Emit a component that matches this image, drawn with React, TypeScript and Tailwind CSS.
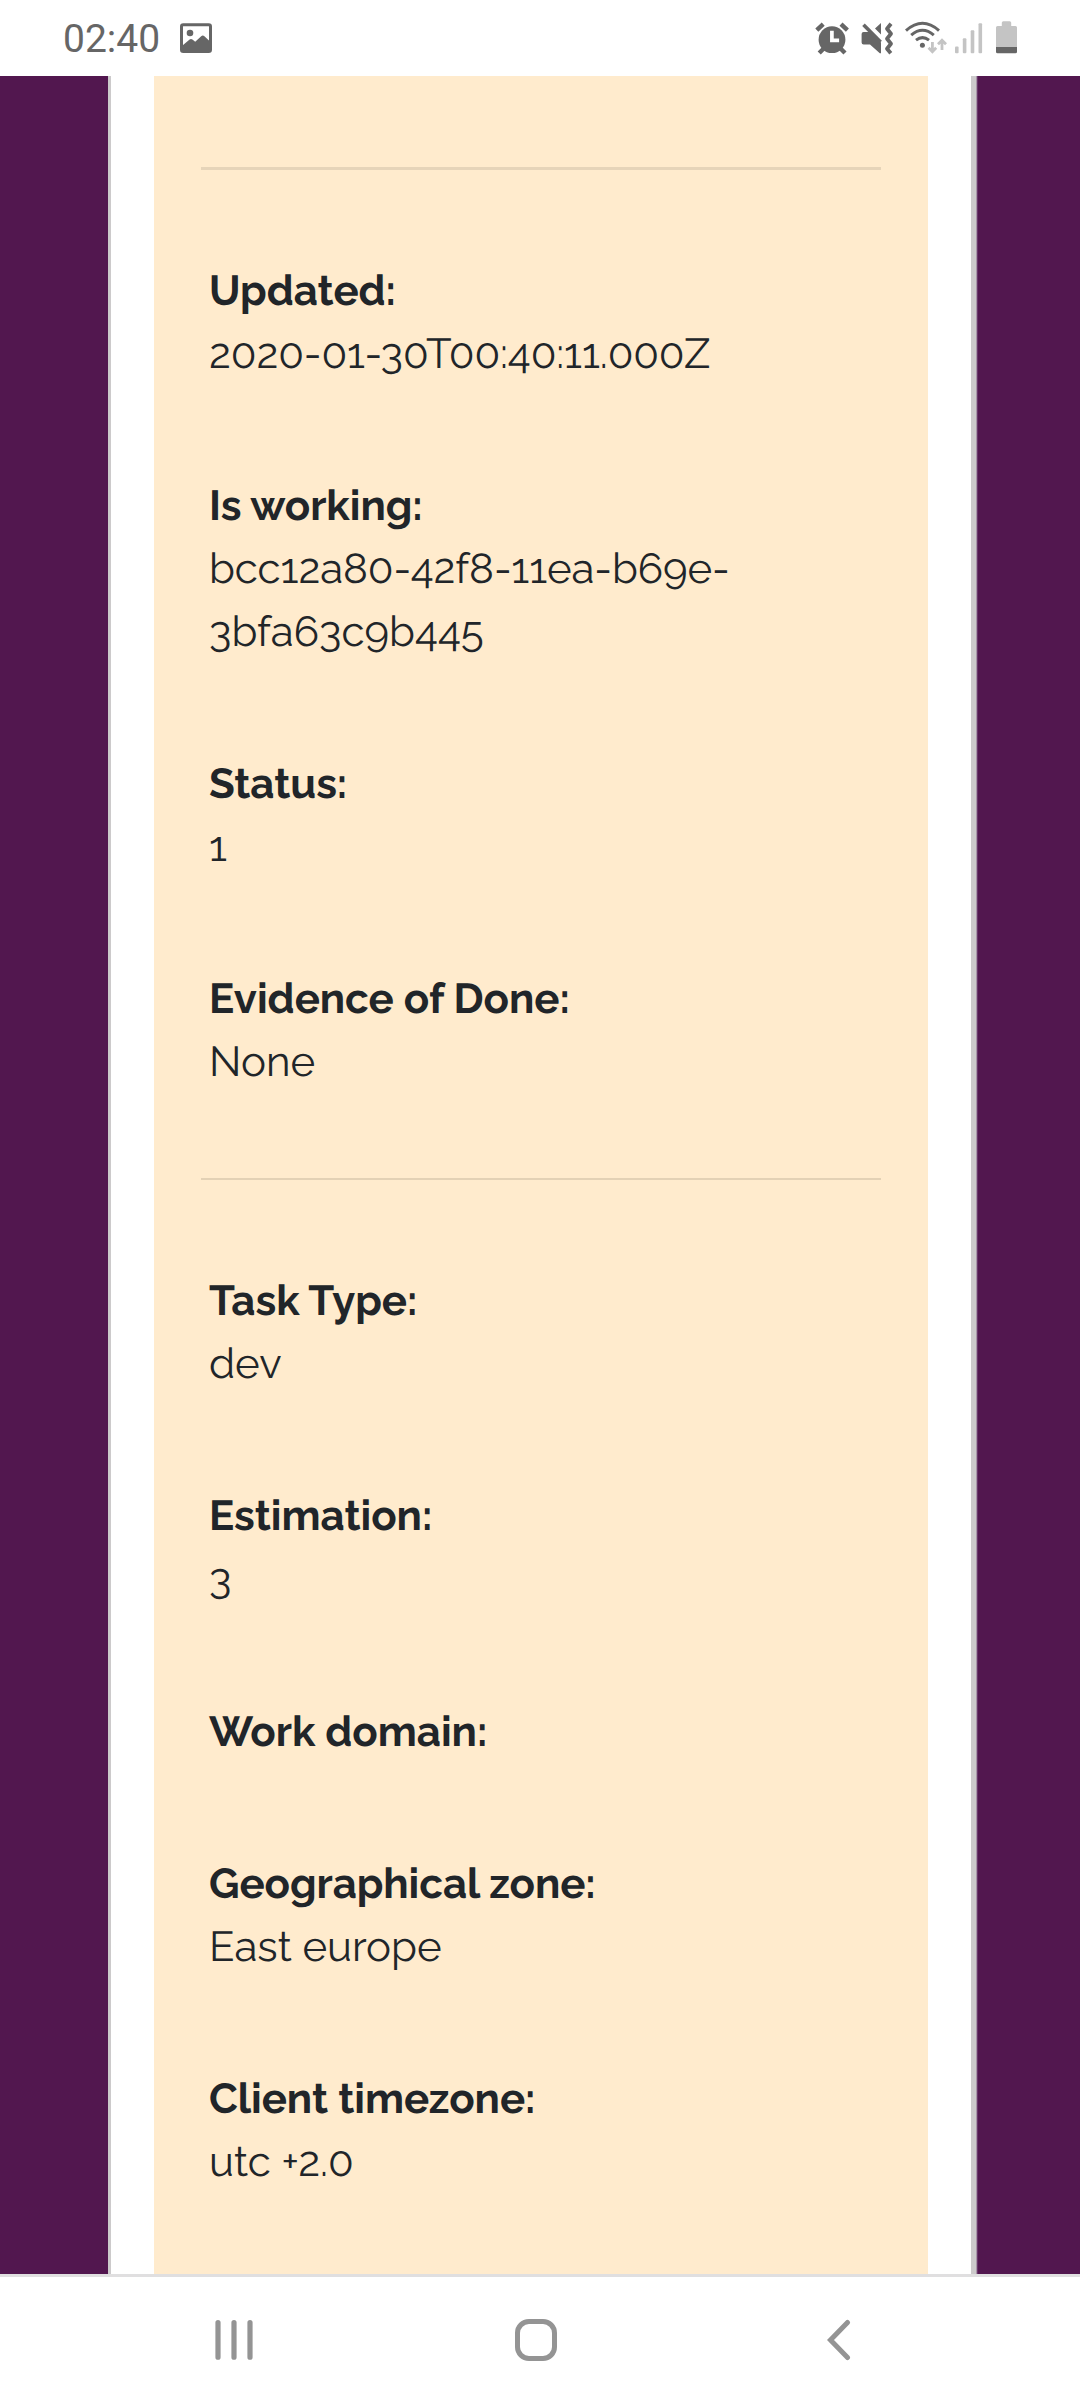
type Field = { label: string; lines: string[] };

const progressFields: Field[] = [
  { label: 'Updated:', lines: ['2020-01-30T00:40:11.000Z'] },
  { label: 'Is working:', lines: ['bcc12a80-42f8-11ea-b69e-', '3bfa63c9b445'] },
  { label: 'Status:', lines: ['1'] },
  { label: 'Evidence of Done:', lines: ['None'] },
];

const taskFields: Field[] = [
  { label: 'Task Type:', lines: ['dev'] },
  { label: 'Estimation:', lines: ['3'] },
  { label: 'Work domain:', lines: [] },
  { label: 'Geographical zone:', lines: ['East europe'] },
  { label: 'Client timezone:', lines: ['utc +2.0'] },
];

function PictureIcon() {
  return (
    <svg className="h-[30px] w-8" viewBox="0 0 32 30" fill="none">
      <rect x="1.5" y="1.7" width="29" height="26.8" rx="1.8" stroke="#666" strokeWidth="3" />
      <circle cx="10" cy="10" r="3.3" fill="#666" />
      <path d="M2.5 22.5L9.6 16.4q1.4-1 2.8 0l2.8 2.4L21.2 13.2q1.6-1.2 3.2 0L29.5 18v10h-27z" fill="#666" />
    </svg>
  );
}

function StatusIcons() {
  return (
    <svg className="h-[76px] w-[204px]" viewBox="815 0 204 76" fill="none">
      {/* alarm */}
      <circle cx="832" cy="39.7" r="13.4" fill="#666" />
      <g stroke="#666" strokeWidth="4.4">
        <path d="M816.8 30.2l6.4-6M847.4 30.2l-6.4-6M819.2 53l5-5M845 53l-5-5" />
      </g>
      <path d="M831.9 30.7v9.6h7.2" stroke="#fff" strokeWidth="3.7" />
      {/* muted, vibrate */}
      <path d="M863.6 32h6.6L881 42.6v10.6h-1.2L870 44.4h-6.4q-2 0-2-2V34q0-2 2-2zM881 23v11.6l-6-6z" fill="#666" />
      <path d="M863.5 24.8L880.6 42" stroke="#666" strokeWidth="3.6" />
      <path d="M891 23.8l-4 4.9 4 5-4 5 4 5-4 5 3.8 4.6" stroke="#666" strokeWidth="3.8" strokeLinejoin="round" />
      {/* wifi */}
      <g stroke="#666" strokeWidth="3">
        <path d="M906 30.6q16.5-14.6 33 0M911.2 35.1q11.3-9.8 22.6 0M916 40.2q6.5-5.2 13 0" />
      </g>
      <circle cx="922.4" cy="45.2" r="2.5" fill="#666" />
      <path
        d="M932.4 42v10M928.6 47.8l3.8 4 3.8-4M942 50V40.2M938 44.2l4-4 4 4"
        stroke="#c4c4c4"
        strokeWidth="2.8"
      />
      {/* signal */}
      <g fill="#c4c4c4">
        <rect x="955" y="46.5" width="3.6" height="6.8" rx="1" />
        <rect x="962.8" y="38.2" width="3.6" height="15.1" rx="1" />
        <rect x="970.7" y="30.3" width="3.6" height="23" rx="1" />
        <rect x="978.5" y="23.3" width="3.6" height="30" rx="1" />
      </g>
      {/* battery */}
      <path d="M997.5 26h4.3v-3.2q0-1.5 1.5-1.5h6.4q1.5 0 1.5 1.5V26h4.3q1.5 0 1.5 1.5V48h-21V27.5q0-1.5 1.5-1.5z" fill="#c4c4c4" />
      <path d="M996 47h21v4.8q0 1.5-1.5 1.5h-18q-1.5 0-1.5-1.5z" fill="#666" />
    </svg>
  );
}

function FieldGroup({ fields }: { fields: Field[] }) {
  return (
    <dl className="flex flex-col gap-[89.2px] pl-2">
      {fields.map((field) => (
        <div key={field.label}>
          <dt className="font-bold tracking-[-0.04px] whitespace-nowrap">{field.label}</dt>
          {field.lines.map((line) => (
            <dd
              key={line}
              className={line.length > 20 ? 'tracking-[-0.1px] whitespace-nowrap' : 'whitespace-nowrap'}
            >
              {line}
            </dd>
          ))}
        </div>
      ))}
    </dl>
  );
}

export default function App() {
  return (
    <div className="flex h-[2400px] w-[1080px] flex-col overflow-hidden bg-white">
      <header className="flex h-[76px] shrink-0 items-center pr-[61px] pl-[63px]">
        <span className="mt-[3px] font-['Roboto',sans-serif] text-[39px] leading-none text-[#666]">02:40</span>
        <div className="ml-5">
          <PictureIcon />
        </div>
        <div className="ml-auto">
          <StatusIcons />
        </div>
      </header>

      <main className="flex h-[2198px] shrink-0 overflow-hidden bg-[#52174f] pl-[108px]">
        <div className="flex h-full w-[868px] border-r-[5px] border-l-[3px] border-[#cccacb] bg-white px-[43px] shadow-[1px_0_0_0_#a995a8,2px_0_0_0_#68376a]">
          <section className="w-full bg-[#ffebcd] px-[47px] font-['Raleway','Lato',sans-serif] text-[42px] leading-[63px] text-[#212529] oldstyle-nums [text-rendering:geometricPrecision]">
            <hr className="mt-[91px] mb-[88.6px] border-t-[3px] border-[#e6d4b9]" />
            <FieldGroup fields={progressFields} />
            <hr className="mt-[84.8px] mb-[89.2px] border-t-[2px] border-[#e3d1b5]" />
            <FieldGroup fields={taskFields} />
          </section>
        </div>
      </main>

      <nav className="flex grow items-start border-t-[3px] border-[#e0dfe0]">
        <svg className="mt-[42px] ml-[215px] h-[42px] w-[38px]" viewBox="215 2319 38 42" stroke="#949494" strokeWidth="5.2" strokeLinecap="round">
          <path d="M218 2322.6v34.6M234 2322.6v34.6M250 2322.6v34.6" />
        </svg>
        <div className="mt-[42px] ml-[262px] h-[42px] w-[42px] rounded-[14px] border-[5px] border-[#949494]" />
        <svg className="mt-[42px] ml-[269px] h-[42px] w-[26px]" viewBox="826 2319 26 42" fill="none" stroke="#949494" strokeWidth="5" strokeLinecap="round">
          <path d="M847.5 2322.5L830.5 2340l17 17.5" />
        </svg>
      </nav>
    </div>
  );
}
